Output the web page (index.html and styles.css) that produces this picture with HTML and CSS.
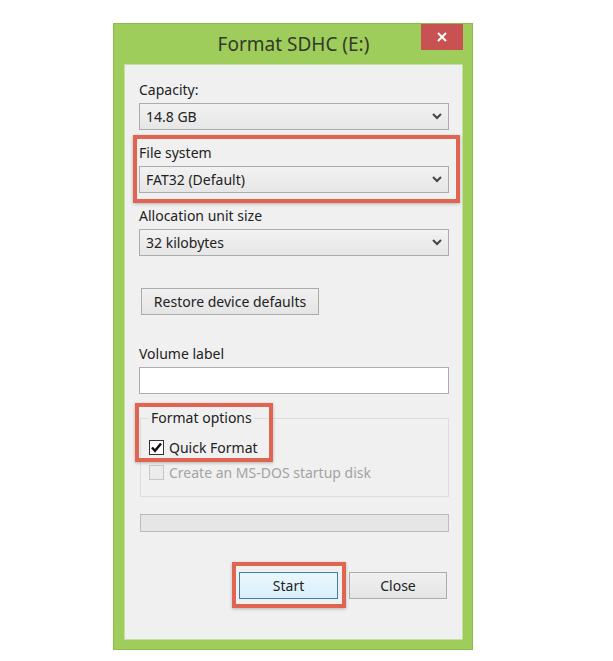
FILE: index.html
```html
<!DOCTYPE html>
<html lang="en">
<head>
  <meta charset="UTF-8" />
  <title>Format SDHC (E:)</title>
  <link rel="stylesheet" href="styles.css">
</head>
<body>
<div class="window">
  <div class="titlebar">
    <div class="title">Format SDHC (E:)</div>
    <div class="close-btn">
      <svg width="10" height="10" viewBox="0 0 10 10"><path d="M1 1 L9 9 M9 1 L1 9" stroke="#fff" stroke-width="2"/></svg>
    </div>
  </div>

  <div class="panel">
    <div class="field">
      <div class="label">Capacity:</div>
      <div class="combo"><span>14.8 GB</span><svg class="chev" width="10" height="7" viewBox="0 0 10 7"><path d="M1 1 L5 5 L9 1" fill="none" stroke="#444" stroke-width="2"/></svg></div>
    </div>

    <div class="field marked">
      <div class="label">File system</div>
      <div class="combo"><span>FAT32 (Default)</span><svg class="chev" width="10" height="7" viewBox="0 0 10 7"><path d="M1 1 L5 5 L9 1" fill="none" stroke="#444" stroke-width="2"/></svg></div>
      <span class="mark mark-fs"></span>
    </div>

    <div class="field">
      <div class="label">Allocation unit size</div>
      <div class="combo"><span>32 kilobytes</span><svg class="chev" width="10" height="7" viewBox="0 0 10 7"><path d="M1 1 L5 5 L9 1" fill="none" stroke="#444" stroke-width="2"/></svg></div>
    </div>

    <button class="btn restore">Restore device defaults</button>

    <div class="label volume-label">Volume label</div>
    <div class="textbox"></div>

    <div class="group">
      <div class="group-title">Format options</div>
      <div class="check-row">
        <span class="checkbox checked">
          <svg width="13" height="13" viewBox="0 0 13 13"><path d="M2 6.5 L5 9.8 L11 2.5" fill="none" stroke="#111" stroke-width="2.4"/></svg>
        </span>
        <span>Quick Format</span>
      </div>
      <div class="check-row disabled">
        <span class="checkbox"></span>
        <span>Create an MS-DOS startup disk</span>
      </div>
      <span class="mark mark-opts"></span>
    </div>

    <div class="progress"></div>

    <div class="actions">
      <div class="start-wrap">
        <button class="btn start">Start</button>
        <span class="mark mark-start"></span>
      </div>
      <button class="btn">Close</button>
    </div>
  </div>
</div>
</body>
</html>
```

FILE: styles.css
```css
/* Reset */
* {
  margin: 0;
  padding: 0;
  box-sizing: border-box;
}

body {
  background: #ffffff;
  font-family: 'Noto Sans', sans-serif;
  font-size: 14px;
  color: #222;
  padding: 23px 0 0 113px;
}

/* Fenster mit grünem Rahmen */
.window {
  width: 360px;
  background: #9ecd5c;
  border: 1px solid #8dbb4e;
  padding: 0 9px 9px 10px;
  box-shadow: 0 2px 0 #3b4a2c;
}

.titlebar {
  display: grid;
  grid-template-columns: 50px 1fr 50px;
  height: 40px;
}

.title {
  grid-column: 2;
  text-align: center;
  font-size: 19px;
  line-height: 40px;
  color: #333a2b;
}

.close-btn {
  grid-column: 3;
  width: 42px;
  height: 26px;
  background: #c85252;
  display: flex;
  align-items: center;
  justify-content: center;
  justify-self: end;
}

.panel {
  background: #f0f0f0;
  border: 1px solid #c4e0a0;
  padding: 16px 13px 40px 14px;
  display: flex;
  flex-direction: column;
}

.label {
  line-height: 18px;
}

.field {
  position: relative;
  margin-bottom: 14px;
}

.field .label {
  margin-bottom: 4px;
}

.combo {
  height: 27px;
  border: 1px solid #acacac;
  background: linear-gradient(#f2f2f2, #e6e6e6);
  display: flex;
  align-items: center;
  justify-content: space-between;
  padding: 0 6px 0 6px;
}

/* Rote Markierungen */
.mark {
  position: absolute;
  border: 4px solid #e06452;
  box-shadow: 0 1px 3px rgba(0, 0, 0, 0.25);
  pointer-events: none;
}

.mark-fs {
  left: -6px;
  top: -9px;
  width: 327px;
  height: 68px;
}

.btn {
  font-family: 'Noto Sans', sans-serif;
  font-size: 14px;
  color: #222;
  height: 27px;
  border: 1px solid #acacac;
  background: linear-gradient(#f0f0f0, #e5e5e5);
}

.restore {
  align-self: flex-start;
  width: 178px;
  margin: 18px 0 0 2px;
}

.volume-label {
  margin-top: 30px;
  margin-bottom: 4px;
}

.textbox {
  height: 27px;
  background: #fff;
  border: 1px solid #abadb3;
}

.group {
  position: relative;
  margin: 24px 0 0 1px;
  border: 1px solid #dcdcdc;
  padding: 0 0 11px 8px;
  display: flex;
  flex-direction: column;
}

.group-title {
  align-self: flex-start;
  margin: -10px 0 8px 0;
  padding: 0 2px;
  line-height: 18px;
  background: #f0f0f0;
}

.check-row {
  display: flex;
  align-items: center;
  gap: 5px;
  height: 25px;
}

.checkbox {
  width: 15px;
  height: 15px;
  border: 1px solid #333;
  background: #fff;
  display: flex;
  align-items: center;
  justify-content: center;
}

.check-row.disabled {
  color: #a3a3a3;
}

.check-row.disabled .checkbox {
  border-color: #c6c6c6;
  background: #ececec;
}

.mark-opts {
  left: -6px;
  top: -16px;
  width: 138px;
  height: 59px;
}

.progress {
  height: 18px;
  margin: 17px 0 0 1px;
  border: 1px solid #bcbcbc;
  background: #e6e6e6;
}

.actions {
  display: flex;
  justify-content: flex-end;
  gap: 11px;
  margin: 40px 2px 0 0;
}

.actions .btn {
  width: 98px;
}

.start-wrap {
  position: relative;
}

.btn.start {
  width: 99px;
  border-color: #3c7fb1;
  background: linear-gradient(#eaf6fd, #d9f0fc);
}

.mark-start {
  left: -7px;
  top: -10px;
  width: 114px;
  height: 46px;
}
```
